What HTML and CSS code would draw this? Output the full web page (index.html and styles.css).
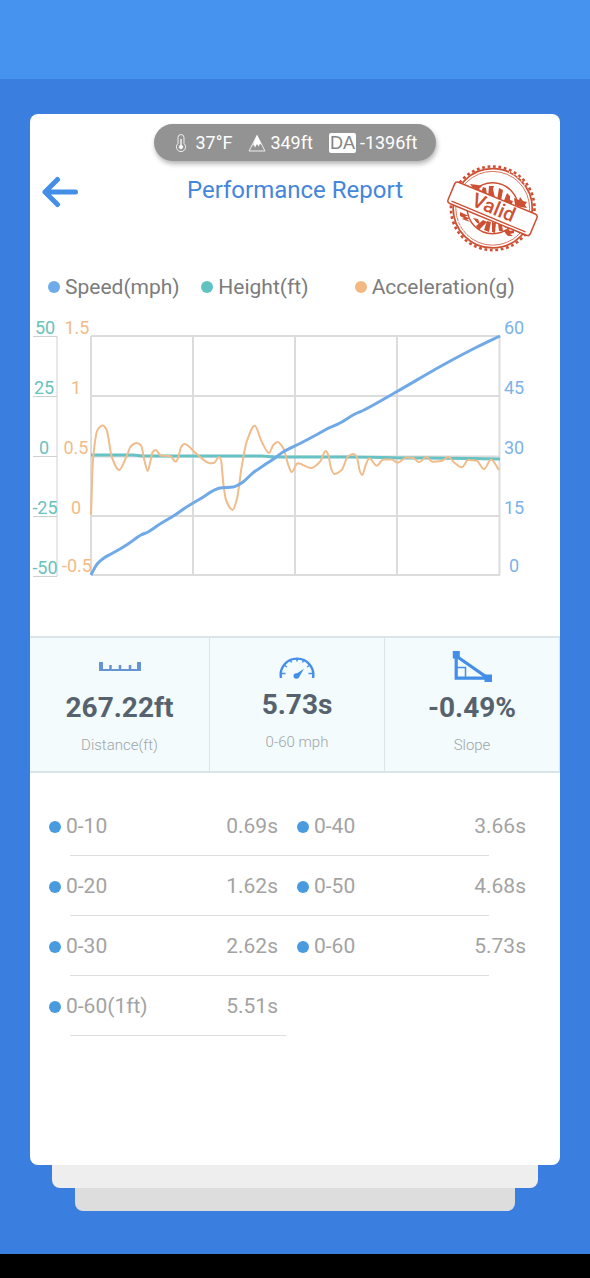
FILE: index.html
```html
<!DOCTYPE html>
<html lang="en">
<head>
<meta charset="utf-8">
<meta name="viewport" content="width=device-width, initial-scale=1">
<title>Performance Report</title>
<link rel="stylesheet" href="styles.css">
</head>
<body>
<div class="status-bar"></div>
<main class="page">
  <article class="card">
    <div class="conditions">
      <span class="condition">
        <svg class="icon-thermo" width="12" height="18" viewBox="0 0 12 18" fill="none" stroke="#eee" stroke-width="1" aria-hidden="true"><path d="M3 9.500V3.500a3 3 0 0 1 6 0v6a4.600 4.600 0 1 1-6 0z"/><path d="M6 5v8" stroke-width="1.500"/><circle cx="6" cy="13" r="1.800" fill="#fff"/></svg>
        37°F
      </span>
      <span class="condition">
        <svg width="18" height="18" viewBox="0 0 18 18" aria-hidden="true"><path d="M9 1.500L1 17h16z" fill="none" stroke="#eee" stroke-width="1"/><path d="M9 1l4.800 10-1.800-1.500-1.200 3-1.800-2.500-2 3.500-1.200-3L4 13z" fill="#fff"/></svg>
        349ft
      </span>
      <span class="condition"><span class="da">DA</span>-1396ft</span>
    </div>

    <header class="header">
      <button class="back" type="button" aria-label="Back">
        <svg width="36" height="32" viewBox="0 0 36 32" fill="none" stroke="#438fe8" stroke-width="5" stroke-linecap="round" stroke-linejoin="round"><path d="M33.500 16H3M15.500 3.500L3 16l12.500 12.500"/></svg>
      </button>
      <h1 class="title">Performance Report</h1>
      <svg class="stamp" width="94" height="92" viewBox="6 7 94 92" role="img" aria-label="Valid">
        <g fill="none" stroke="#ce5034">
          <circle cx="52.700" cy="53.300" r="41.800" stroke-width="2.600" stroke-dasharray="2.800 2.670"/>
          <circle cx="52.700" cy="53.300" r="39.600" stroke-width="1.800"/>
          <circle cx="52.700" cy="53.300" r="36.900" stroke-width=".8"/>
          <circle cx="52.700" cy="53.300" r="25.500" stroke-width="1.500"/>
        </g>
        <g fill="#ce5034">
          <path d="M41 38l2-6 3 1 1 8zM48 42l1-11 5 0-1 3 2 9zM57 45l2-12 4 2-2 11zM63 48l4-10 3 3 0 4 3 1-2 5zM30 29l8 1 4 1-3 3 3 2-6-1-3-2zM74 43l5 2 1-3 3 4 4 1-2 3 2 3-7-1-5-2z"/>
          <path d="M33 63l5 1 2 5-3-1zM36 71l7-6 4 2-8 8zM44 75l3-9 4 1-2 10zM52 77l0-10 4 1-1 10zM59 76l-1-7 4 1 1 6zM65 73l-2-5 4 1 2 2zM20 57l9 4-4 0 5 3-3 0 3 3-8-3 2-1-4-2zM64 76l5-2 1 2 4-1 0 3-4 1 3 2-5 0-2-2z"/>
        </g>
        <g fill="none" stroke="#fff" stroke-width="1.500" stroke-dasharray="1 4"><path d="M69 17q12 5 18 17M18 66q6 14 15 19"/></g>
        <g transform="rotate(22.500 52.700 53.300)">
          <rect x="8.200" y="42.300" width="89" height="23" rx="3" fill="#fff" stroke="#ce5034" stroke-width="1.500"/>
          <path d="M12 62.500h80" stroke="#ce5034" stroke-width="1.300"/>
          <text class="stamp-text" x="53.500" y="59" text-anchor="middle">Valid</text>
        </g>
      </svg>
    </header>

    <ul class="legend">
      <li class="legend-item"><span class="dot dot-speed"></span>Speed(mph)</li>
      <li class="legend-item"><span class="dot dot-height"></span>Height(ft)</li>
      <li class="legend-item"><span class="dot dot-accel"></span>Acceleration(g)</li>
    </ul>

    <svg class="chart" viewBox="30 310 530 280" role="img" aria-label="Speed, height and acceleration over time">
      <path class="grid" d="M91 336H500M91 396H500M91 456.500H500M91 516H500M91 575H500M91 336V575M193 336V575M295 336V575M397 336V575M499.500 336V575"/>
      <path class="axis" d="M33 336.500H57V576.500H33M33 396.500H57M33 456.500H57M33 516.500H57"/>
      <g class="ticks ticks-height">
        <text x="45" y="334">50</text><text x="44" y="394">25</text><text x="44" y="454">0</text><text x="45" y="514">-25</text><text x="45" y="574">-50</text>
      </g>
      <g class="ticks ticks-accel">
        <text x="77" y="334">1.5</text><text x="76" y="394">1</text><text x="76" y="454">0.5</text><text x="76" y="514">0</text><text x="77" y="572">-0.5</text>
      </g>
      <g class="ticks ticks-speed">
        <text x="514" y="334">60</text><text x="514" y="394">45</text><text x="514" y="454">30</text><text x="514" y="514">15</text><text x="514" y="572">0</text>
      </g>
      <path class="line line-height" id="height"/>
      <path class="line line-accel" id="accel"/>
      <path class="line line-speed" id="speed"/>
    </svg>

    <section class="stats">
      <div class="stat">
        <svg class="stat-icon" width="42" height="32" viewBox="0 0 42 32" fill="none" stroke="#6594d4" aria-hidden="true"><path d="M2 12v8.500M40 12v8.500" stroke-width="4"/><path d="M0 20H42" stroke-width="2.200"/><path d="M11.500 15v5M21 15v5M31 15v5" stroke-width="2.500"/></svg>
        <strong class="stat-value">267.22ft</strong>
        <span class="stat-label">Distance(ft)</span>
      </div>
      <div class="stat stat-middle">
        <svg class="stat-icon" width="36" height="32" viewBox="0 0 36 32" fill="none" stroke="#438fe8" aria-hidden="true"><path d="M2 31A16.300 16.300 0 1 1 34 31" stroke-width="2.400"/><path d="M2.500 26.500h4M5 18l3 2M11 12.500l1.500 3M18 11v3.500M25 12.500l-1.500 3M31 18l-3 2M33.500 26.500h-4" stroke-width="1.500"/><path d="M15.600 28l9.300-6.300L19.500 31.300z" fill="#438fe8" stroke="none"/><circle cx="17.300" cy="29" r="2.800" fill="#438fe8" stroke="none"/></svg>
        <strong class="stat-value">5.73s</strong>
        <span class="stat-label">0-60 mph</span>
      </div>
      <div class="stat">
        <svg class="stat-icon" width="40" height="32" viewBox="0 0 40 32" fill="none" stroke="#438fe8" aria-hidden="true"><path d="M4.200 5V28.200H36L4.200 6" stroke-width="3.200"/><path d="M5 17.500h8.500v10" stroke-width="1.500"/><path d="M.8 1h7v7.500h-7zM32.500 24.500H40V32h-7.500z" fill="#438fe8" stroke="none"/></svg>
        <strong class="stat-value">-0.49%</strong>
        <span class="stat-label">Slope</span>
      </div>
    </section>

    <ul class="splits">
      <li class="split-row">
        <div class="split"><span class="dot dot-split"></span><span>0-10</span><span class="split-time">0.69s</span></div>
        <div class="split"><span class="dot dot-split"></span><span>0-40</span><span class="split-time">3.66s</span></div>
      </li>
      <li class="split-row">
        <div class="split"><span class="dot dot-split"></span><span>0-20</span><span class="split-time">1.62s</span></div>
        <div class="split"><span class="dot dot-split"></span><span>0-50</span><span class="split-time">4.68s</span></div>
      </li>
      <li class="split-row">
        <div class="split"><span class="dot dot-split"></span><span>0-30</span><span class="split-time">2.62s</span></div>
        <div class="split"><span class="dot dot-split"></span><span>0-60</span><span class="split-time">5.73s</span></div>
      </li>
      <li class="split-row split-row-single">
        <div class="split"><span class="dot dot-split"></span><span>0-60(1ft)</span><span class="split-time">5.51s</span></div>
      </li>
    </ul>
  </article>
  <div class="sheet sheet-near"></div>
  <div class="sheet sheet-far"></div>
</main>
<div class="nav-bar"></div>
<script src="chart.js"></script>
</body>
</html>
```

FILE: styles.css
```css
* {
  box-sizing: border-box;
}

body {
  margin: 0;
  min-height: 100vh;
  display: flex;
  flex-direction: column;
  background: #3a7fe0;
  font-family: Roboto, "Liberation Sans", sans-serif;
}

.status-bar {
  height: 79px;
  background: #4592ef;
}

.nav-bar {
  height: 24px;
  background: #000;
}

.page {
  flex: 1;
  display: flex;
  flex-direction: column;
  padding: 35px 30px 43px;
}

.card {
  flex: 1;
  display: flex;
  flex-direction: column;
  padding-top: 10px;
  border-radius: 8px;
  background: #fff;
}

.sheet {
  height: 23px;
  border-radius: 0 0 8px 8px;
}

.sheet-near {
  margin: 0 22px;
  background: #eee;
}

.sheet-far {
  margin: 0 45px;
  background: #ddd;
}

.conditions {
  align-self: center;
  display: flex;
  align-items: center;
  gap: 16px;
  height: 37px;
  padding: 0 18px 0 21px;
  border-radius: 19px;
  background: #939393;
  box-shadow: 1px 3px 5px rgba(0, 0, 0, 0.3);
  color: #fff;
  font-size: 18px;
  line-height: 24px;
}

.condition {
  display: flex;
  align-items: center;
  gap: 4px;
}

.icon-thermo {
  margin-right: 4px;
}

.da {
  padding: 0 1px;
  border-radius: 2px;
  background: #fff;
  color: #858585;
  font-family: "Liberation Sans", sans-serif;
  font-size: 18px;
  line-height: 20px;
}

.header {
  display: grid;
  grid-template-columns: 1fr auto 1fr;
  align-items: start;
  margin-top: 1px;
}

.back {
  justify-self: start;
  margin: 14px 0 0 12px;
  padding: 0;
  border: 0;
  background: none;
  line-height: 0;
  cursor: pointer;
}

.title {
  margin: 14px 0 0;
  color: #4486db;
  font-size: 24px;
  font-weight: 400;
  line-height: 28px;
}

.stamp {
  justify-self: end;
  margin-right: 20px;
}

.stamp-text {
  fill: #ce5034;
  font-family: Roboto, sans-serif;
  font-size: 20px;
  font-weight: 500;
}

.dot {
  flex: none;
  width: 12px;
  height: 12px;
  border-radius: 50%;
}

.dot-speed { background: #6eabea; }
.dot-height { background: #60c3c2; }
.dot-accel { background: #f3b983; }

.dot-split {
  margin-top: 2px;
  background: #499bdf;
}

.legend {
  display: grid;
  grid-template-columns: repeat(3, minmax(0, 1fr));
  margin: 21px 0 0;
  padding: 0 52px 0 18px;
  list-style: none;
  color: #7c7c7c;
  font-size: 21px;
  line-height: 24px;
}

.legend-item {
  display: flex;
  align-items: center;
  gap: 5px;
  white-space: nowrap;
}

.chart {
  display: block;
  width: 100%;
  margin-top: 11px;
}

.grid {
  fill: none;
  stroke: #dcdcdc;
  stroke-width: 2;
}

.axis {
  fill: none;
  stroke: #d0d0d0;
  stroke-width: 1;
}

.ticks {
  font-size: 18px;
  text-anchor: middle;
}

.ticks-height { fill: #68c3bd; }
.ticks-accel { fill: #f3bb86; }
.ticks-speed { fill: #7db2e9; }

.line {
  fill: none;
  stroke-linejoin: round;
}

.line-height {
  stroke: #66c2c4;
  stroke-width: 3;
}

.line-accel {
  stroke: #f1bc8b;
  stroke-width: 2;
}

.line-speed {
  stroke: #70a9e8;
  stroke-width: 3;
}

.stats {
  display: grid;
  grid-template-columns: 180fr 175fr 175fr;
  margin-top: 46px;
  border: solid #dbe5e9;
  border-width: 2px 0;
  background: #f3fbfd;
}

.stat {
  display: flex;
  flex-direction: column;
  align-items: center;
  padding: 12px 0 16px;
  border-right: 1px solid #dbe4e9;
}

.stat-middle {
  padding-top: 9px;
}

.stat-value {
  margin-top: 8px;
  color: #56626d;
  font-size: 28px;
  font-weight: 700;
  line-height: 36px;
}

.stat-label {
  margin-top: 9px;
  color: #a0a5a8;
  font-size: 15px;
  font-weight: 300;
  line-height: 20px;
}

.splits {
  margin: 23px 0 0;
  padding: 0 15px 0 19px;
  list-style: none;
  color: #a3a3a3;
  font-size: 21px;
  line-height: 24px;
}

.split-row {
  display: grid;
  grid-template-columns: 1fr 1fr;
}

.split-row::after {
  content: "";
  grid-column: 1 / -1;
  height: 1px;
  margin: 0 56px 0 21px;
  background: #dedede;
}

.split-row-single::after {
  grid-column: 1;
  margin-right: 11px;
}

.split {
  display: flex;
  align-items: center;
  gap: 5px;
  height: 59px;
}

.split-time {
  margin: 0 19px 0 auto;
}
```

FILE: chart.js
```js
const series = {
  height: [[91,455],[133,455],[143,456],[262,456],[275,457],[350,457],[415,458],[425,458],[500,459]],
  speed: [[91,575],[93,571],[98,563],[104,558],[111,554],[120,549],[128,544],[141,535],[148,532],[160,524],[175,515],[185,508],[200,499],[220,488],[233,487],[238,485],[243,482],[254,472],[263,466],[275,458],[283,452],[300,443.5],[316,435],[325,430],[340,423],[355,414],[362,411],[397,391.5],[443,365],[477,347],[500,336]],
  accel: [[91,515],[93,460],[97.5,430],[102.7,425.5],[106.7,430],[111.7,456.7],[119,470],[126.7,456],[131,446],[136.7,443],[141,445.3],[144.3,460],[147.7,471],[150.7,460],[152.7,452],[155.7,450],[161,455.7],[170,456],[175.7,461.7],[178.3,457.3],[181,447.3],[184.3,444],[196.7,454],[210,463.3],[214.3,462.7],[219,457],[221,460],[223.3,483.3],[226,500],[232.7,510],[236.7,500],[241.7,466.7],[246.7,441.7],[254.7,425.7],[261.7,441.7],[269,453],[273.3,445],[277.7,442],[283.3,448.3],[288.3,465],[291.7,472],[297.7,463.3],[311,468],[320,461.7],[325.7,451],[328.3,455],[331,468.3],[334.3,474],[341.7,470],[347.7,456.7],[353.3,454],[356.7,456.7],[360,471.7],[362.3,475],[365.7,465],[369.3,458.3],[376.7,465.7],[383.3,459.5],[391.7,459.5],[397.7,462.7],[406.7,457.5],[413.3,458],[419,462.3],[426.7,457],[432.3,461.7],[441.7,461],[448.3,457],[455,463.3],[461.7,467.3],[468.3,460],[476.7,460.7],[484,469.3],[491,459.5],[499,470]]
};

// Horizontal tangents at turning points keep the curve from overshooting.
function slope(points, i) {
  const p = points[i - 1], c = points[i], n = points[i + 1];
  if (!p || !n) {
    const a = p || c, b = n || c;
    return (b[1] - a[1]) / (b[0] - a[0]);
  }
  const before = (c[1] - p[1]) / (c[0] - p[0]);
  const after = (n[1] - c[1]) / (n[0] - c[0]);
  return before * after <= 0 ? 0 : 2 * before * after / (before + after);
}

function curve(points) {
  let d = `M${points[0]}`;
  for (let i = 1; i < points.length; i++) {
    const a = points[i - 1], b = points[i];
    const h = (b[0] - a[0]) / 3;
    d += `C${a[0] + h},${a[1] + h * slope(points, i - 1)} ${b[0] - h},${b[1] - h * slope(points, i)} ${b}`;
  }
  return d;
}

for (const [id, points] of Object.entries(series)) {
  document.getElementById(id).setAttribute("d", curve(points));
}
```
